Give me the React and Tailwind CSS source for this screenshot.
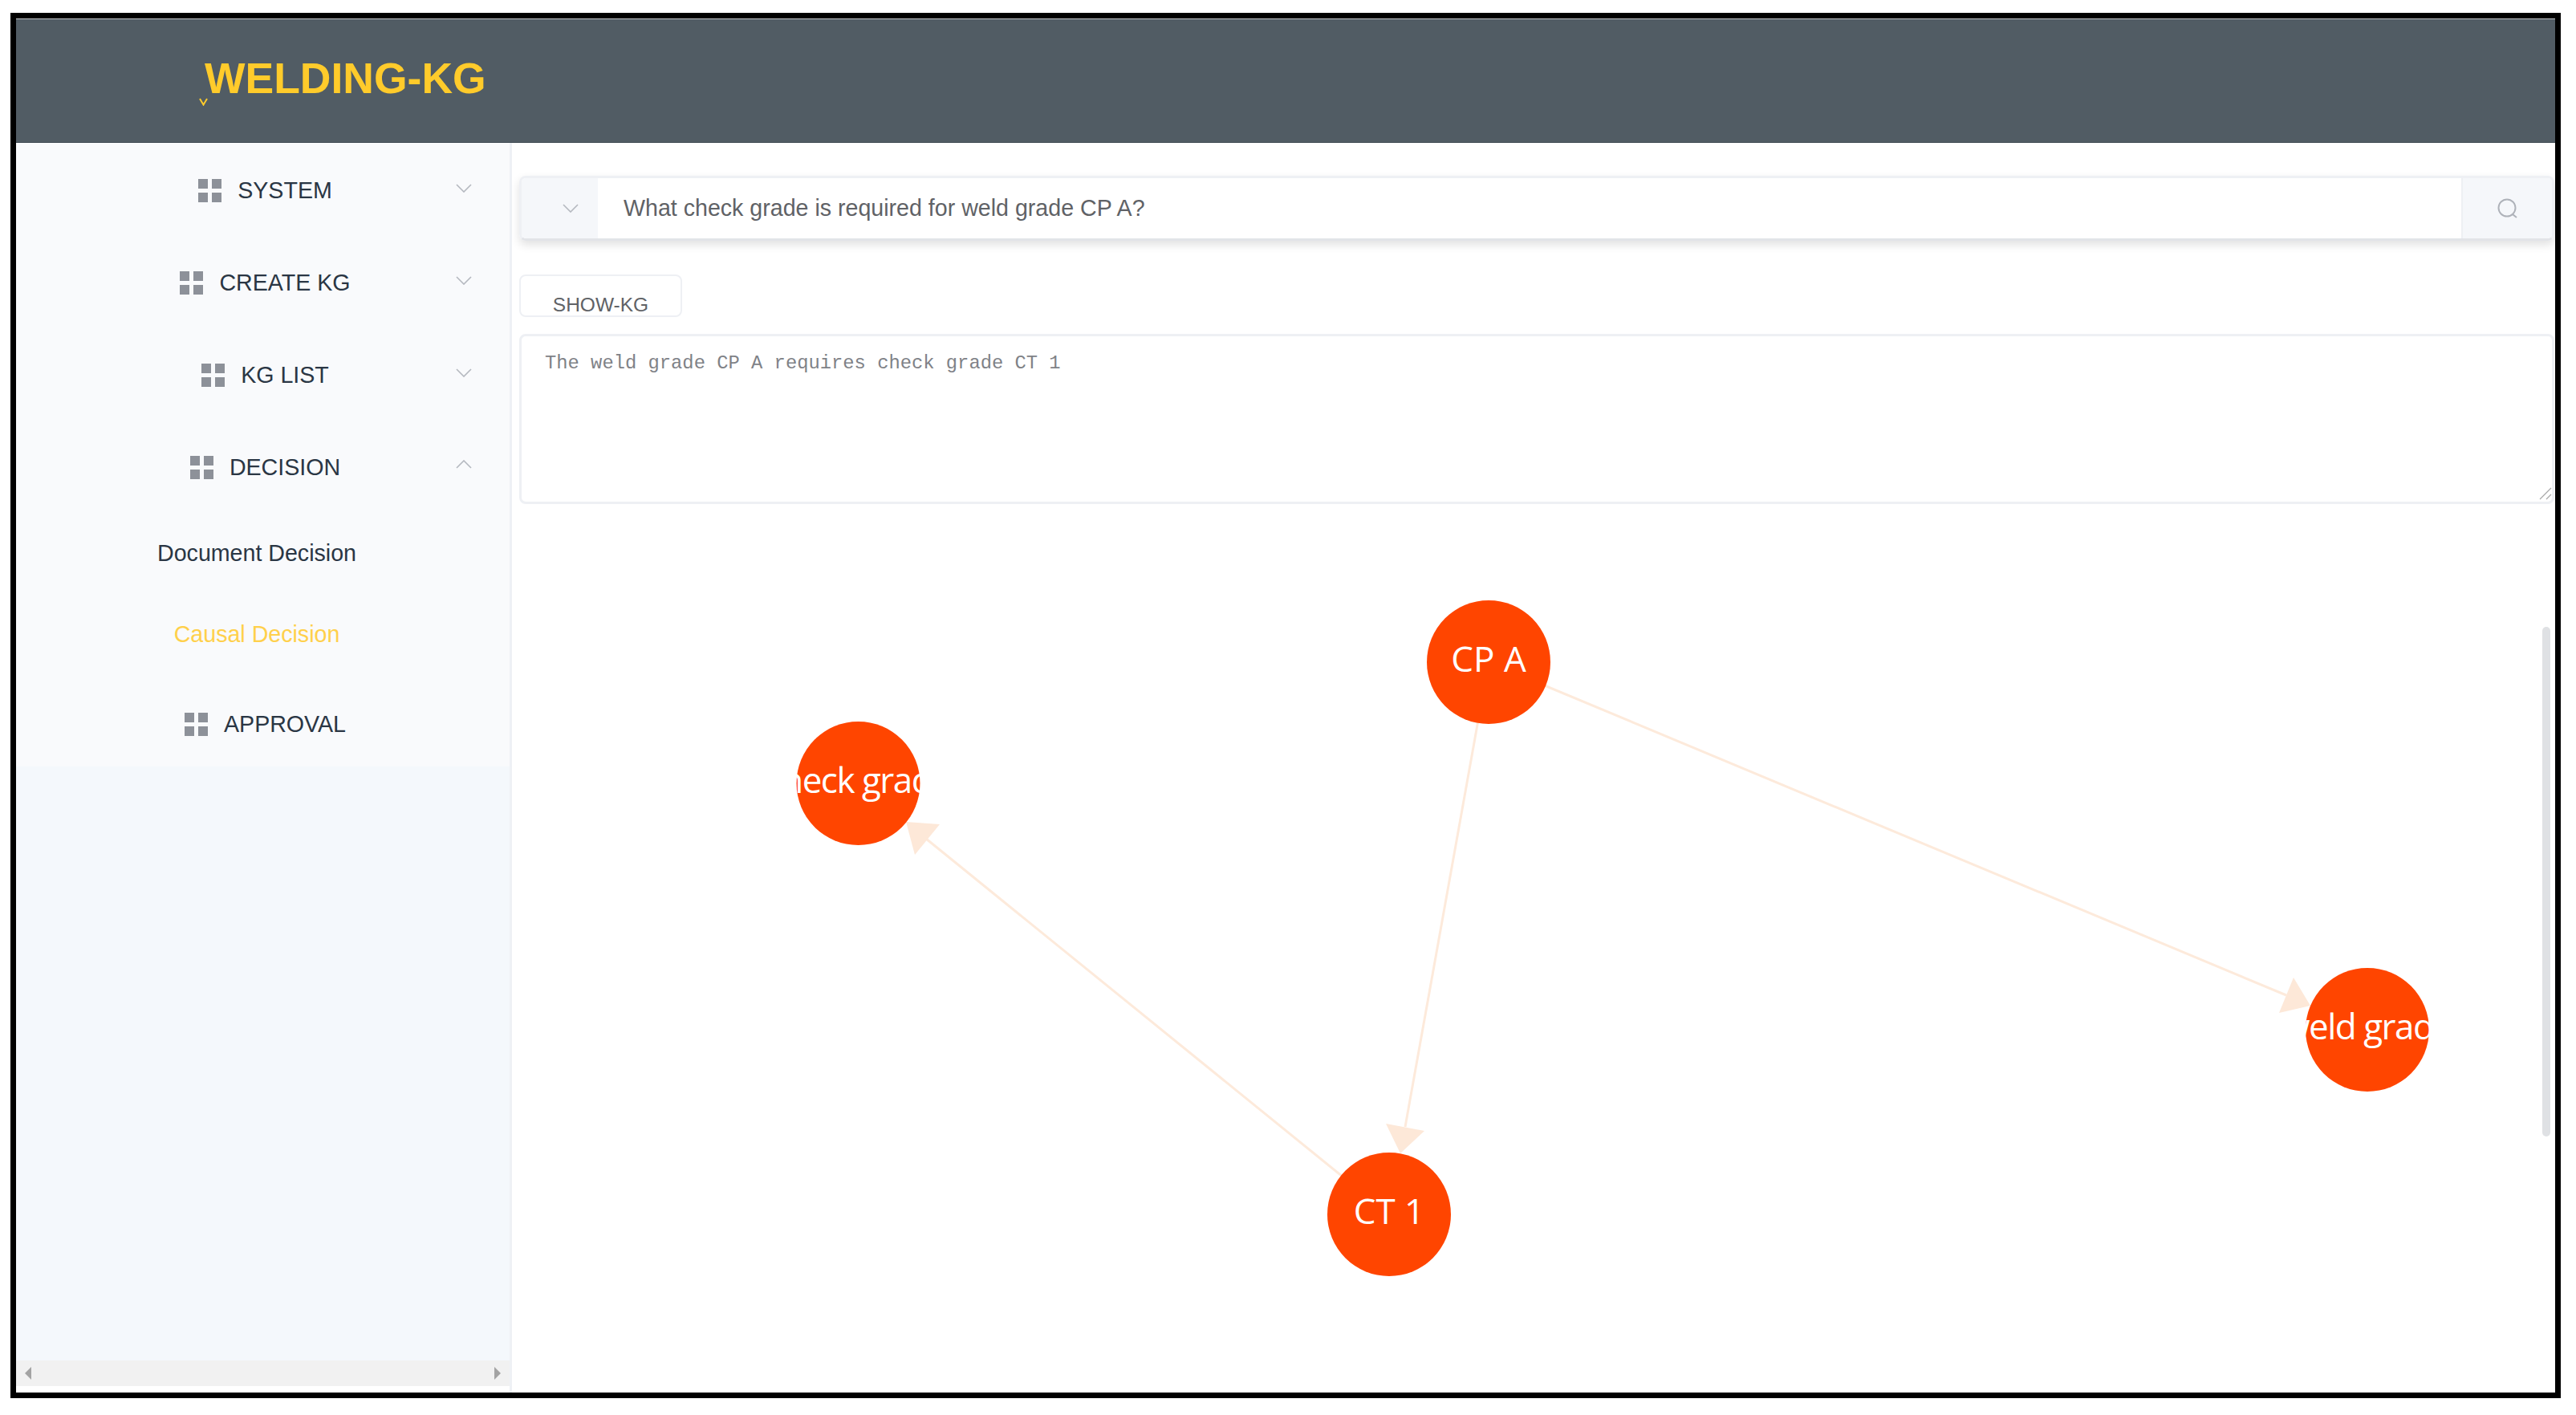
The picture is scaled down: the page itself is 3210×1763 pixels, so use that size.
import React from "react";

const Chevron = ({ up = false, className = "" }) => (
  <svg width="20" height="11" viewBox="0 0 20 11" fill="none" className={className}>
    <path d={up ? "M1 10 L10 1 L19 10" : "M1 1 L10 10 L19 1"} stroke="#b4b8bf" strokeWidth="1.6" />
  </svg>
);

const Grid = () => (
  <svg width="29" height="29" viewBox="0 0 29 29" className="shrink-0">
    <rect x="0" y="0" width="12" height="12" fill="#8d9199" />
    <rect x="17" y="0" width="12" height="12" fill="#8d9199" />
    <rect x="0" y="17" width="12" height="12" fill="#8d9199" />
    <rect x="17" y="17" width="12" height="12" fill="#8d9199" />
  </svg>
);

const MenuRow = ({ label, open, heightClass, topClass }) => (
  <div className={`relative flex items-center justify-center gap-5 pl-[6px] ${heightClass}`}>
    <Grid />
    <span className="text-[28.6px] leading-none text-[#2a3644]">{label}</span>
    {open !== undefined && (
      <Chevron up={open} className={`absolute left-[548px] ${topClass}`} />
    )}
  </div>
);

const SubRow = ({ label, active }) => (
  <div
    className={`flex h-[101px] items-center justify-center pr-[15px] text-[28.6px] leading-none ${
      active ? "text-[#ffd04b]" : "text-[#2a3644]"
    }`}
  >
    {label}
  </div>
);

const nodes = [
  { cx: 1855, cy: 825, label: "CP A", spacing: "0" },
  { cx: 1069.5, cy: 976, label: "check grade", spacing: "-1.5" },
  { cx: 1731, cy: 1513, label: "CT 1", spacing: "0" },
  { cx: 2950, cy: 1283, label: "weld grade", spacing: "-1.5" },
];

const Graph = () => (
  <svg viewBox="647 628 2536 1107" className="h-full w-full">
    <g stroke="#fdeadb" strokeWidth="3">
      <line x1="1855" y1="825" x2="2849" y2="1240" />
      <line x1="1855" y1="825" x2="1751" y2="1404" />
      <line x1="1731" y1="1513" x2="1154" y2="1045" />
    </g>
    <g fill="#fde8d8">
      <polygon points="2879,1253 2858,1218 2840,1262" />
      <polygon points="1745,1437 1775,1409 1727,1400" />
      <polygon points="1129,1024 1171,1027 1140,1065" />
    </g>
    {nodes.map((n) => (
      <g key={n.label}>
        <circle cx={n.cx} cy={n.cy} r="77" fill="#ff4500" />
        <text
          x={n.cx}
          y={n.cy - 5}
          fill="#ffffff"
          fontSize="44"
          letterSpacing={n.spacing}
          textAnchor="middle"
          dominantBaseline="central"
          fontFamily="'Open Sans', 'Noto Sans', sans-serif"
        >
          {n.label}
        </text>
      </g>
    ))}
  </svg>
);

export default function App() {
  return (
    <div className="h-[1763px] w-[3210px] overflow-hidden bg-white pl-[13px] pt-[16px] font-['Liberation_Sans',Arial,sans-serif]">
      <div className="flex h-[1726px] w-[3178px] flex-col border-[7px] border-black bg-white">
        <header className="flex h-[155px] shrink-0 items-center border-y border-y-[#3f4a52] border-t-[#c3c7ca] bg-[#515c64] pb-[6px] pl-[228px]">
          <svg width="11" height="10" viewBox="0 0 11 10" className="-mr-[4px] mt-[58px] shrink-0" fill="none">
            <path d="M1 1 L5.5 8.5 L10 1" stroke="#ffcb2b" strokeWidth="2" />
          </svg>
          <span className="text-[53.5px] font-bold leading-none text-[#ffcb2b]">WELDING-KG</span>
        </header>

        <div className="flex min-h-0 flex-1">
          <aside className="flex w-[618px] shrink-0 flex-col border-r-[3px] border-r-[#eef1f5] bg-[#f4f8fc]">
            <nav className="h-[777px] shrink-0 bg-[#f9fafc] pt-[2px]">
              <MenuRow label="SYSTEM" open={false} heightClass="h-[115px]" topClass="top-[49px]" />
              <MenuRow label="CREATE KG" open={false} heightClass="h-[115px]" topClass="top-[49px]" />
              <MenuRow label="KG LIST" open={false} heightClass="h-[115px]" topClass="top-[49px]" />
              <MenuRow label="DECISION" open={true} heightClass="h-[114px]" topClass="top-[48px]" />
              <SubRow label="Document Decision" />
              <SubRow label="Causal Decision" active />
              <div className="pt-[6px]">
                <MenuRow label="APPROVAL" heightClass="h-[110px]" />
              </div>
            </nav>
            <div className="flex-1" />
            <div className="flex h-[32px] items-center justify-between bg-[#f1f1f1] px-[10px]">
              <svg width="10" height="16" viewBox="0 0 10 16"><polygon points="9,0 1,8 9,16" fill="#a3a3a3" /></svg>
              <svg width="10" height="16" viewBox="0 0 10 16"><polygon points="1,0 9,8 1,16" fill="#a3a3a3" /></svg>
            </div>
            <div className="h-[8px] bg-white" />
          </aside>

          <main className="flex min-w-0 flex-1 flex-col pl-[9px] pr-[1px] pt-[41px] text-[#606266]">
            <div className="flex h-[81px] shrink-0 overflow-hidden rounded-[8px] border-[3px] border-[#eef0f4] border-b-[#e2e4e8] shadow-[0_5px_12px_rgba(0,0,0,0.12)]">
              <div className="flex w-[95px] shrink-0 items-center justify-center bg-[#f5f7fa] pl-[26px]">
                <Chevron />
              </div>
              <input
                readOnly
                value="What check grade is required for weld grade CP A?"
                className="min-w-0 flex-1 bg-white pl-[32px] text-[28.6px] text-[#606266] outline-none"
              />
              <div className="flex w-[113px] shrink-0 items-center justify-center border-l-[2px] border-l-[#eef0f4] bg-[#f5f7fa]">
                <svg width="30" height="30" viewBox="0 0 30 30" fill="none">
                  <circle cx="14" cy="14" r="10.5" stroke="#aeb2b9" strokeWidth="2" />
                  <path d="M21 22 L26 26" stroke="#aeb2b9" strokeWidth="2" />
                </svg>
              </div>
            </div>

            <button className="mt-[42px] flex h-[53px] w-[203px] shrink-0 items-end justify-center rounded-[8px] border-[2px] border-[#eef0f4] bg-white text-[24.5px] leading-[26px] text-[#606266]">
              SHOW-KG
            </button>

            <div className="relative mt-[21px] h-[212px] shrink-0">
              <textarea
                readOnly
                value="The weld grade CP A requires check grade CT 1"
                className="block h-full w-full resize-none rounded-[8px] border-[3px] border-[#eef0f4] bg-white px-[29px] py-[20px] font-['Liberation_Mono',monospace] text-[23.8px] leading-[28px] text-[#7f8287] outline-none"
              />
              <svg width="16" height="16" viewBox="0 0 16 16" className="absolute bottom-[5px] right-[3px]" fill="none">
                <path d="M1 15 L15 1 M9 15 L15 9" stroke="#a8a8a8" strokeWidth="1.2" />
              </svg>
            </div>

            <div className="relative min-h-0 flex-1">
              <Graph />
              <div className="absolute right-[5px] top-[153px] h-[635px] w-[10px] rounded-full bg-[#dfe1e4]" />
            </div>
          </main>
        </div>
      </div>
    </div>
  );
}
